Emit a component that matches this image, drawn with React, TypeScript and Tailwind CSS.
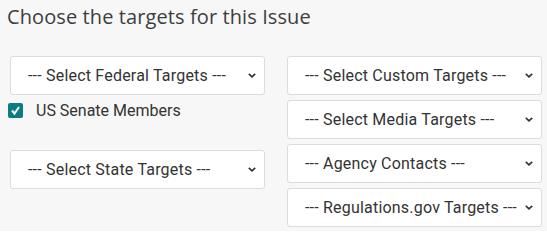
import React from "react";

function Chevron() {
  return (
    <svg width="10" height="7" viewBox="0 0 10 7" className="shrink-0">
      <path d="M1.8 1.8 L5 4.8 L8.2 1.8" fill="none" stroke="#333" strokeWidth="1.7" />
    </svg>
  );
}

function FakeSelect({ label, className = "" }: { label: string; className?: string }) {
  return (
    <div
      className={`flex items-center justify-between h-[39px] bg-white border border-[#dcdcdc] rounded-[3px] pl-[17px] pr-[7px] text-[16px] text-[#333] ${className}`}
    >
      <span className="whitespace-nowrap tracking-[0.2px]">{label}</span>
      <Chevron />
    </div>
  );
}

export default function App() {
  return (
    <div
      className="w-[547px] h-[231px] bg-[#f7f7f7] pl-[7px] pt-[3px] overflow-hidden"
      style={{ fontFamily: "Roboto, 'Liberation Sans', sans-serif" }}
    >
      <h1
        className="text-[20px] leading-[28px] text-[#3d3d3d] tracking-[0.1px]"
        style={{ fontFamily: "'Open Sans', sans-serif" }}
      >
        Choose the targets for this Issue
      </h1>

      <div className="mt-[25px] ml-[3px] grid grid-cols-[255px_255px] gap-x-[22px]">
        {/* left */}
        <div className="flex flex-col">
          <FakeSelect label="--- Select Federal Targets ---" />
          <div className="flex items-center mt-[8px] h-[15px] -ml-[2px]">
            <div className="w-[15px] h-[15px] rounded-[2px] bg-[#0c7c84] flex items-center justify-center">
              <svg width="11" height="11" viewBox="0 0 11 11">
                <path d="M2 5.5 L4.5 8.5 L9 2" fill="none" stroke="#fff" strokeWidth="2" />
              </svg>
            </div>
            <span className="ml-[13px] text-[16px] text-[#333]">US Senate Members</span>
          </div>
          <FakeSelect label="--- Select State Targets ---" className="mt-[32px]" />
        </div>

        {/* right */}
        <div className="flex flex-col gap-[5px]">
          <FakeSelect label="--- Select Custom Targets ---" />
          <FakeSelect label="--- Select Media Targets ---" />
          <FakeSelect label="--- Agency Contacts ---" />
          <FakeSelect label="--- Regulations.gov Targets ---" />
        </div>
      </div>
    </div>
  );
}
